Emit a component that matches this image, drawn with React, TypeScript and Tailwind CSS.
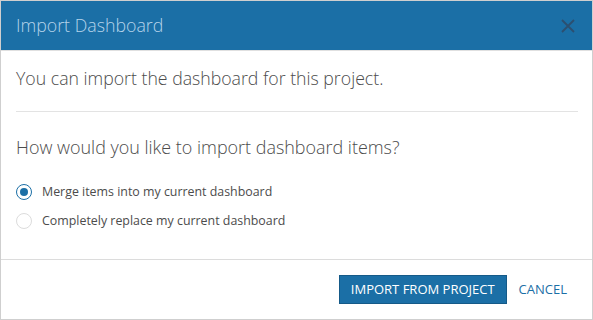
import React from "react";

export default function App() {
  return (
    <div
      className="w-[593px] h-[320px] bg-white border border-[#cfcfcf] flex flex-col text-[#4c4c4c]"
      style={{ fontFamily: "'Open Sans', sans-serif" }}
    >
      <div className="h-[49px] bg-[#1b6fa6] flex items-center justify-between pl-[15px] pr-[14px] border-b border-[#e0e0e0] box-content">
        <span className="text-[17.8px] text-[#b5d3ea] font-light">Import Dashboard</span>
        <svg width="16" height="16" viewBox="0 0 16 16" className="mr-[2px]">
          <path d="M2 2 L14 14 M14 2 L2 14" stroke="#2c4f70" strokeWidth="1.8" fill="none" />
        </svg>
      </div>
      <div className="flex-1 px-[15px]">
        <div className="pt-[16px] pb-[22px] border-b border-[#e3e3e3] mr-[-1px]">
          <p className="text-[17.7px] leading-[22px] font-light">You can import the dashboard for this project.</p>
        </div>
        <p className="text-[17.95px] leading-[22px] mt-[24px] font-light">How would you like to import dashboard items?</p>
        <div className="mt-[26px] flex flex-col gap-[13px]">
          <label className="flex items-center gap-[10px] h-[16px]">
            <span className="w-[16px] h-[16px] rounded-full border border-[#1b6fa6] flex items-center justify-center">
              <span className="w-[8px] h-[8px] rounded-full bg-[#1b6fa6]" />
            </span>
            <span className="text-[12.4px]">Merge items into my current dashboard</span>
          </label>
          <label className="flex items-center gap-[10px] h-[16px]">
            <span className="w-[16px] h-[16px] rounded-full border border-[#dcdcdc]" />
            <span className="text-[12.4px]">Completely replace my current dashboard</span>
          </label>
        </div>
      </div>
      <div className="h-[60px] border-t border-[#dcdcdc] flex items-center justify-end pr-[25px] gap-[12px]">
        <button className="h-[29px] px-[11px] bg-[#1b6fa6] border border-[#155a88] text-white text-[13px]">
          IMPORT FROM PROJECT
        </button>
        <button className="text-[13px] text-[#1b6fa6]">CANCEL</button>
      </div>
    </div>
  );
}
